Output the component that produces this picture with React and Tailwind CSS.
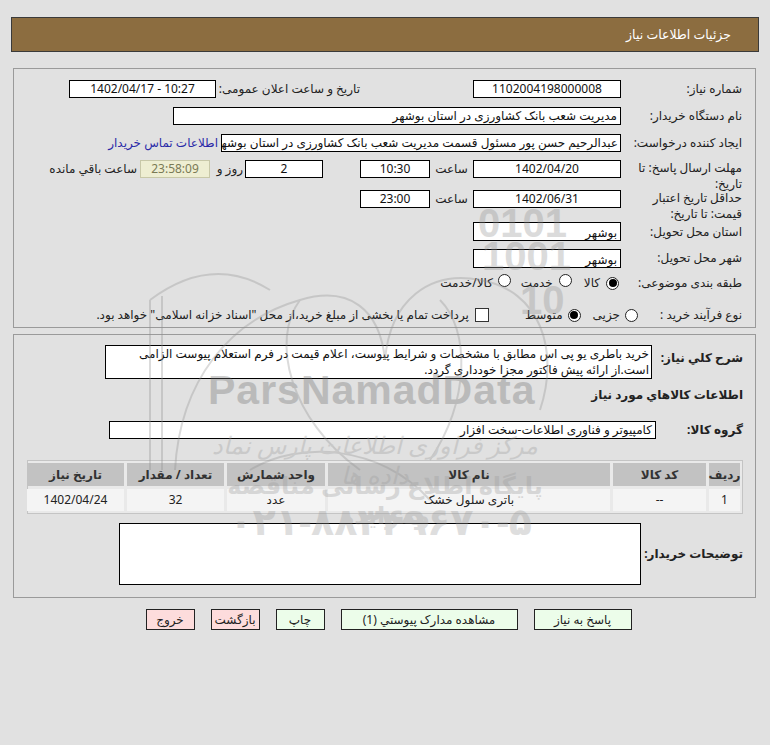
import React from "react";

function Field({ className = "", children }) {
  return (
    <div
      className={`h-[18px] shrink-0 overflow-hidden whitespace-nowrap border border-black bg-white px-[3px] text-[12px] leading-[16px] text-[#111] ${className}`}
    >
      {children}
    </div>
  );
}

function Radio({ checked = false }) {
  return (
    <span className="inline-flex h-[13px] w-[13px] shrink-0 items-center justify-center rounded-full border border-[#222] bg-white">
      {checked && <span className="h-[8px] w-[8px] rounded-full bg-black" />}
    </span>
  );
}

function Button({ className = "", children }) {
  return (
    <button
      type="button"
      className={`h-[21px] shrink-0 border border-[#222] text-[12px] leading-[18px] text-[#222] ${className}`}
    >
      {children}
    </button>
  );
}

// faint site watermark laid over the form
function Watermark() {
  return (
    <div className="pointer-events-none absolute inset-0 z-10 overflow-hidden text-[#9a9a9a] opacity-[0.32]">
      <svg className="absolute left-0 top-0" width="770" height="745" viewBox="0 0 770 745" fill="none" stroke="#909090" strokeWidth="2">
        <path d="M150 300 L150 470" />
        <path d="M162 296 L162 470" />
        <path d="M150 300 C190 270 230 265 270 290" />
        <path d="M175 470 C180 380 230 320 300 300 C350 285 380 310 385 360" />
        <path d="M385 360 C390 300 430 270 480 280 C540 290 560 350 540 410" />
        <path d="M300 300 C270 340 290 420 360 470" />
        <path d="M440 300 C470 330 470 400 430 460" />
        <path d="M250 470 C300 440 380 445 430 500" />
      </svg>
      <div className="absolute left-[478px] top-[205px] font-['Liberation_Sans',sans-serif] text-[40px] font-bold leading-[36px] text-[#909090]">0101</div>
      <div className="absolute left-[482px] top-[238px] font-['Liberation_Sans',sans-serif] text-[40px] font-bold leading-[36px] text-[#909090]">1001</div>
      <div className="absolute left-[520px] top-[282px] font-['Liberation_Sans',sans-serif] text-[40px] font-bold leading-[36px] text-[#909090]">10</div>
      <div className="absolute left-[208px] top-[370px] font-['Liberation_Sans',sans-serif] text-[41px] font-bold leading-[40px] tracking-[1px] text-[#6a6a6a]">
        ParsNamadData
      </div>
      <div dir="rtl" className="absolute left-[205px] top-[430px] w-[340px] text-center text-[24px] italic leading-[30px]">
        مرکز فراوری اطلاعات پارس نماد داده ها
      </div>
      <div dir="rtl" className="absolute left-[205px] top-[470px] w-[360px] text-center text-[24px] font-bold leading-[30px]">
        پایگاه اطلاع رسانی مناقصه ومزایده
      </div>
      <div className="absolute left-[232px] top-[500px] w-[300px] text-center text-[38px] font-bold leading-[40px]">
        ۰۲۱-۸۸۳۴۹۶۷۰-۵
      </div>
    </div>
  );
}

export default function App() {
  return (
    <div
      dir="rtl"
      className="relative min-h-[745px] w-[770px] bg-[#e1e1e1] pt-[17px] font-['Noto_Sans','DejaVu_Sans',sans-serif] text-[12px] text-[#222]"
    >
      {/* header bar */}
      <div className="mx-[11px] flex h-[35px] items-center border border-[#3a3a3a] bg-[#8c6d40] pr-[27px] pt-[2px] text-[12.5px] text-white">
        جزئیات اطلاعات نیاز
      </div>

      {/* main info panel */}
      <div className="ml-[13px] mr-[14px] mt-[16px] h-[260px] border border-[#9a9a9a] pr-[13px] pt-[6px]">
        <div className="flex h-[27px] items-center">
          <div className="w-[121px] shrink-0">شماره نیاز:</div>
          <Field className="w-[148px] text-center">1102004198000008</Field>
          <div className="mr-[113px] w-[144px] shrink-0">تاریخ و ساعت اعلان عمومی:</div>
          <Field className="w-[147px] text-center">
            <span dir="ltr">1402/04/17 - 10:27</span>
          </Field>
        </div>

        <div className="flex h-[27px] items-center">
          <div className="w-[121px] shrink-0">نام دستگاه خریدار:</div>
          <Field className="w-[448px]">مدیریت شعب بانک کشاورزی در استان بوشهر</Field>
        </div>

        <div className="flex h-[27px] items-center">
          <div className="w-[121px] shrink-0">ایجاد کننده درخواست:</div>
          <Field className="w-[400px] pr-[2px]">عبدالرحیم حسن پور مسئول قسمت مدیریت شعب بانک کشاورزی در استان بوشهر</Field>
          <a className="mr-[3px] whitespace-nowrap text-[#2a2aa8]">اطلاعات تماس خریدار</a>
        </div>

        <div className="flex h-[34px] items-start pt-[4px]">
          <div className="w-[121px] shrink-0 leading-[16px]">
            مهلت ارسال پاسخ: تا
            <br />
            تاریخ:
          </div>
          <Field className="w-[148px] text-center">1402/04/20</Field>
          <div className="w-[43px] shrink-0 text-center leading-[18px]">ساعت</div>
          <Field className="w-[70px] text-center">10:30</Field>
          <Field className="mr-[37px] w-[78px] text-center">2</Field>
          <div className="w-[35px] shrink-0 whitespace-nowrap pr-[2px] leading-[18px]">روز و</div>
          <div className="h-[18px] w-[70px] shrink-0 border border-[#c8c8a8] bg-[#eeeed2] text-center leading-[16px] text-[#7a7a55]">
            23:58:09
          </div>
          <div className="mr-[3px] shrink-0 whitespace-nowrap leading-[18px]">ساعت باقي مانده</div>
        </div>

        <div className="flex h-[32px] items-start">
          <div className="w-[121px] shrink-0 leading-[16px]">
            حداقل تاریخ اعتبار
            <br />
            قیمت: تا تاریخ:
          </div>
          <Field className="w-[148px] text-center">1402/06/31</Field>
          <div className="w-[43px] shrink-0 text-center leading-[18px]">ساعت</div>
          <Field className="w-[70px] text-center">23:00</Field>
        </div>

        <div className="flex h-[27px] items-start">
          <div className="w-[121px] shrink-0 pt-[2px] leading-[16px]">استان محل تحویل:</div>
          <Field className="h-[19px] w-[148px] pt-[2px]">بوشهر</Field>
        </div>

        <div className="flex h-[26px] items-start">
          <div className="w-[121px] shrink-0 pt-[1px] leading-[16px]">شهر محل تحویل:</div>
          <Field className="h-[19px] w-[148px] pt-[2px]">بوشهر</Field>
        </div>

        <div className="flex h-[16px] items-center">
          <div className="w-[123px] shrink-0">طبقه بندی موضوعی:</div>
          <Radio checked />
          <span className="mr-[6px]">کالا</span>
          <span className="mr-[12px]">
            <Radio />
          </span>
          <span className="mr-[6px]">خدمت</span>
          <span className="mr-[10px]">
            <Radio />
          </span>
          <span className="mr-[5px]">کالا/خدمت</span>
        </div>

        <div className="mt-[16px] flex h-[16px] items-center">
          <div className="w-[104px] shrink-0">نوع فرآیند خرید :</div>
          <Radio />
          <span className="mr-[5px]">جزیی</span>
          <span className="mr-[12px]">
            <Radio checked />
          </span>
          <span className="mr-[5px]">متوسط</span>
          <span className="mr-[36px] h-[14px] w-[14px] shrink-0 border border-[#333] bg-white" />
          <span className="mr-[6px] whitespace-nowrap">
            پرداخت تمام یا بخشی از مبلغ خرید،از محل "اسناد خزانه اسلامی" خواهد بود.
          </span>
        </div>
      </div>

      {/* items panel */}
      <div className="ml-[13px] mr-[14px] mt-[6px] border border-[#9a9a9a] px-[12px] pb-[12px] pt-[10px]">
        <div className="flex items-start">
          <div className="mt-[3px] w-[91px] shrink-0 whitespace-nowrap text-[12px] font-bold leading-[20px]">شرح كلي نياز:</div>
          <div className="h-[34px] w-[547px] shrink-0 border border-black bg-white px-[2px] text-[12px] leading-[16px] text-[#111]">
            خرید باطری یو پی اس مطابق با مشخصات و شرایط پیوست، اعلام قیمت در فرم استعلام پیوست الزامی است.از ارائه پیش فاکتور مجزا خودداری گردد.
          </div>
        </div>

        <div className="mt-[6px] whitespace-nowrap text-[12px] font-bold leading-[20px]">اطلاعات كالاهاي مورد نياز</div>

        <div className="mt-[16px] flex items-center">
          <div className="w-[87px] shrink-0 whitespace-nowrap text-[12px] font-bold">گروه کالا:</div>
          <Field className="w-[547px]">کامپیوتر و فناوری اطلاعات-سخت افزار</Field>
        </div>

        <div className="mt-[21px] grid w-[716px] grid-cols-[31px_93px_282px_98px_97px_97px] gap-[3px] border border-[#c4c4c4] bg-[#e9e9e9] p-[2px] text-center">
          {["ردیف", "کد کالا", "نام کالا", "واحد شمارش", "تعداد / مقدار", "تاریخ نیاز"].map((h) => (
            <div key={h} className="flex h-[23px] items-center justify-center whitespace-nowrap bg-[#c2c2c2] text-[12px] font-bold text-[#333]">
              {h}
            </div>
          ))}
          {["1", "--", "باتری سلول خشک", "عدد", "32", "1402/04/24"].map((c, i) => (
            <div key={i} className="flex h-[22px] items-center justify-center bg-[#f4f4f4] text-[12px] text-[#222]">
              {c}
            </div>
          ))}
        </div>

        <div className="mt-[9px] flex items-center">
          <div className="w-[102px] shrink-0 whitespace-nowrap text-[12px] font-bold">توضیحات خریدار:</div>
          <div className="h-[62px] w-[522px] shrink-0 border border-black bg-white" />
        </div>
      </div>

      {/* action buttons */}
      <div className="mt-[11px] flex justify-center gap-[16px] pl-[7px]">
        <Button className="w-[98px] bg-[#ecfdea]">پاسخ به نیاز</Button>
        <Button className="w-[177px] bg-[#ecfdea]">مشاهده مدارک پیوستي (1)</Button>
        <Button className="w-[49px] bg-[#ecfdea]">چاپ</Button>
        <Button className="w-[49px] bg-[#fddcdc]">بازگشت</Button>
        <Button className="w-[49px] bg-[#fddcdc]">خروج</Button>
      </div>

      <Watermark />
    </div>
  );
}
